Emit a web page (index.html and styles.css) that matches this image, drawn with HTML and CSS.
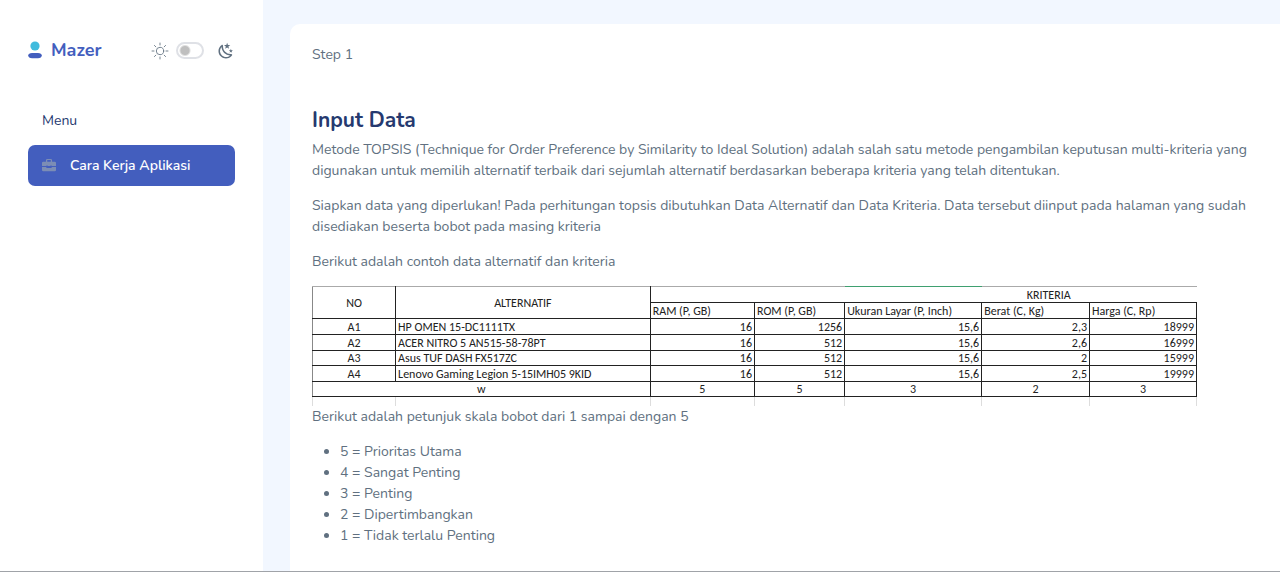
FILE: index.html
```html
<!DOCTYPE html>
<html lang="id">
<head>
<meta charset="utf-8">
<meta name="viewport" content="width=device-width, initial-scale=1">
<title>Mazer</title>
<link rel="stylesheet" href="styles.css">
</head>
<body>
<div class="app">
  <aside class="sidebar">
    <header class="sidebar-header">
      <a class="brand" href="#">
        <svg class="brand-logo" viewBox="0 0 14 18" aria-hidden="true">
          <circle cx="7" cy="5" r="4.600" fill="#41bbdd"/>
          <path d="M4 12h6c2.300 0 3.800 1 3.800 2.600S12.300 17.300 10 17.300H4C1.700 17.300.2 16.200.2 14.600S1.700 12 4 12z" fill="#435ebe"/>
        </svg>
        <span>Mazer</span>
      </a>
      <div class="theme-toggle">
        <svg class="icon" viewBox="0 0 21 21" aria-hidden="true">
          <g fill="none" stroke="#607080" stroke-linecap="round" stroke-linejoin="round">
            <circle cx="10.500" cy="10.500" r="4.300"/>
            <path d="M10.500 1.200v2.300M10.500 17.500v2.300M1.200 10.500h2.300M17.500 10.500h2.300M4 4l1.600 1.600M15.400 15.400L17 17M4 17l1.600-1.600M15.400 5.600L17 4"/>
          </g>
        </svg>
        <input class="switch" type="checkbox" aria-label="Mode gelap">
        <svg class="icon" viewBox="0 0 24 24" aria-hidden="true">
          <path fill="#607080" d="m17.750 4.090-2.530 1.940.91 3.060-2.630-1.810-2.630 1.810.91-3.060-2.530-1.940L12.440 4l1.060-3 1.060 3 3.190.09m3.500 6.910-1.640 1.250.59 1.980-1.700-1.170-1.700 1.170.59-1.980L15.750 11l2.060-.05L18.500 9l.69 1.950 2.060.05m-2.280 4.950c.83-.08 1.720 1.100 1.190 1.850-.32.450-.66.870-1.080 1.270C15.170 23 8.840 23 4.940 19.070c-3.910-3.900-3.910-10.240 0-14.140.4-.4.820-.76 1.270-1.080.75-.53 1.930.36 1.850 1.190-.27 2.860.69 5.830 2.890 8.020a9.960 9.960 0 0 0 8.020 2.890m-1.640 2.020a12.080 12.080 0 0 1-7.800-3.470c-2.170-2.190-3.330-5-3.490-7.820-2.810 3.140-2.700 7.960.31 10.980 3.020 3.010 7.840 3.120 10.980.31z"/>
        </svg>
      </div>
    </header>
    <nav class="menu">
      <h2 class="menu-title">Menu</h2>
      <a class="menu-link" href="#">
        <svg class="menu-icon" viewBox="0 0 16 16" aria-hidden="true">
          <path fill="#7c8db5" d="M6 0A1.500 1.500 0 0 0 4.500 1.500V3H1.500A1.500 1.500 0 0 0 0 4.500V8h5v-.5h1.500V8h3v-.5H11V8h5V4.500A1.500 1.500 0 0 0 14.500 3h-3V1.500A1.500 1.500 0 0 0 10 0H6zM6 1.200h4V3H6V1.200zM0 9v3.500A1.500 1.500 0 0 0 1.500 14h13a1.500 1.500 0 0 0 1.500-1.500V9h-5v1.200H5V9H0z"/>
        </svg>
        <span>Cara Kerja Aplikasi</span>
      </a>
    </nav>
  </aside>
  <main class="content">
    <section class="card">
      <p class="step">Step 1</p>
      <h1 class="title">Input Data</h1>
      <p>Metode TOPSIS (Technique for Order Preference by Similarity to Ideal Solution) adalah salah satu metode pengambilan keputusan multi-kriteria yang digunakan untuk memilih alternatif terbaik dari sejumlah alternatif berdasarkan beberapa kriteria yang telah ditentukan.</p>
      <p>Siapkan data yang diperlukan! Pada perhitungan topsis dibutuhkan Data Alternatif dan Data Kriteria. Data tersebut diinput pada halaman yang sudah disediakan beserta bobot pada masing kriteria</p>
      <p>Berikut adalah contoh data alternatif dan kriteria</p>
      <table class="data">
        <colgroup><col class="c-no"><col class="c-alt"><col class="c-ram"><col class="c-rom"><col class="c-layar"><col class="c-berat"><col class="c-harga"></colgroup>
        <thead>
          <tr><th rowspan="2">NO</th><th rowspan="2">ALTERNATIF</th><th class="group group-start" colspan="2"></th><th class="group group-selected"></th><th class="group group-name" colspan="2">KRITERIA</th></tr>
          <tr class="names"><th>RAM (P, GB)</th><th>ROM (P, GB)</th><th>Ukuran Layar (P, Inch)</th><th>Berat (C, Kg)</th><th>Harga (C, Rp)</th></tr>
        </thead>
        <tbody>
          <tr><th>A1</th><td class="name">HP OMEN 15-DC1111TX</td><td>16</td><td>1256</td><td>15,6</td><td>2,3</td><td>18999</td></tr>
          <tr><th>A2</th><td class="name">ACER NITRO 5 AN515-58-78PT</td><td>16</td><td>512</td><td>15,6</td><td>2,6</td><td>16999</td></tr>
          <tr class="short"><th>A3</th><td class="name">Asus TUF DASH FX517ZC</td><td>16</td><td>512</td><td>15,6</td><td>2</td><td>15999</td></tr>
          <tr><th>A4</th><td class="name">Lenovo Gaming Legion 5-15IMH05 9KID</td><td>16</td><td>512</td><td>15,6</td><td>2,5</td><td>19999</td></tr>
        </tbody>
        <tfoot>
          <tr class="short"><th colspan="2">w</th><th>5</th><th>5</th><th>3</th><th>2</th><th>3</th></tr>
          <tr class="tail"><td></td><td></td><td></td><td></td><td></td><td></td><td></td></tr>
        </tfoot>
      </table>
      <p>Berikut adalah petunjuk skala bobot dari 1 sampai dengan 5</p>
      <ul class="scale">
        <li>5 = Prioritas Utama</li>
        <li>4 = Sangat Penting</li>
        <li>3 = Penting</li>
        <li>2 = Dipertimbangkan</li>
        <li>1 = Tidak terlalu Penting</li>
      </ul>
    </section>
  </main>
</div>
</body>
</html>
```
FILE: styles.css
```css
* { box-sizing: border-box; }

body {
  margin: 0;
  background: #f2f7ff;
  color: #607080;
  font: 14px/21px Nunito, Lato, sans-serif;
}

.app {
  display: flex;
  min-height: 100vh;
  border-bottom: 1px solid #a0a3a8;
}

.sidebar {
  flex: 0 0 263px;
  padding: 36px 28px;
  background: #fff;
}

.sidebar-header {
  display: flex;
  align-items: center;
  justify-content: space-between;
  height: 28px;
}

.brand {
  display: flex;
  align-items: center;
  gap: 9px;
  color: #435ebe;
  font-size: 18px;
  line-height: 28px;
  font-weight: 700;
  text-decoration: none;
}

.brand-logo { width: 14px; height: 18px; }

.theme-toggle {
  display: flex;
  align-items: center;
  gap: 7px;
  padding-top: 1px;
}

.icon { width: 18px; height: 18px; }
.icon:last-child { margin-left: 6px; }

.switch {
  appearance: none;
  width: 28px;
  height: 17px;
  margin: 0;
  border: 2px solid #dfe1e6;
  border-radius: 9px;
  background: radial-gradient(circle at 7px 50%, #bfbfbf 4px, #fff 6px);
}

.menu { margin-top: 46px; }

.menu-title {
  margin: 0 0 14px;
  padding-left: 14px;
  color: #25396f;
  font-size: 14px;
  font-weight: 400;
}

.menu-link {
  display: flex;
  align-items: center;
  gap: 14px;
  padding: 10px 14px;
  border-radius: 7px;
  background: #435ebe;
  color: #fff;
  font-weight: 600;
  text-decoration: none;
}

.menu-icon { width: 14px; height: 14px; }

.content {
  flex: 1;
  min-width: 0;
  padding: 24px 0 0 27px;
}

.card {
  min-height: 100%;
  padding: 20px 21px 24px 22px;
  border-radius: 10px 0 0;
  background: #fff;
}

.card p { margin: 0 0 14px; }
.card .step { margin-bottom: 42px; }

.title {
  margin: 0 0 6px;
  color: #25396f;
  font-size: 21px;
  line-height: 26px;
  font-weight: 700;
}

.data {
  width: 100%;
  max-width: 885px;
  table-layout: fixed;
  border-collapse: collapse;
  color: #222;
  font: 12px/14px Calibri, Carlito, Lato, sans-serif;
}

.c-no { width: 9.4%; }
.c-alt { width: 28.8%; }
.c-ram { width: 11.8%; }
.c-rom { width: 10.2%; }
.c-layar { width: 15.5%; }
.c-berat { width: 12.2%; }
.c-harga { width: 12.1%; }

.data tr { height: 16px; }
.data .short { height: 15px; }
.data th, .data td {
  padding: 0 2px;
  border: 1px solid #222;
  font-weight: 400;
  white-space: nowrap;
}
.data td { text-align: right; }
.data .name, .names th, .data .group-name { text-align: left; }
.data .group-name { padding-left: 45px; }
.data .group { border-left: 0; border-right: 0; }
.data .group-start { border-left: 1px solid #222; }
.data thead tr:first-child th { border-top-color: #aaa; }
.data thead tr:first-child .group-selected { border-top-color: #3fa070; }
.data tr > :first-child { border-left-color: #888; }
.data .names > :first-child { border-left-color: #222; }
.data .tail { height: 9px; }
.data .tail td { border: solid #ddd; border-width: 0 1px; }

.scale {
  margin: 0;
  padding-left: 28px;
}
```
